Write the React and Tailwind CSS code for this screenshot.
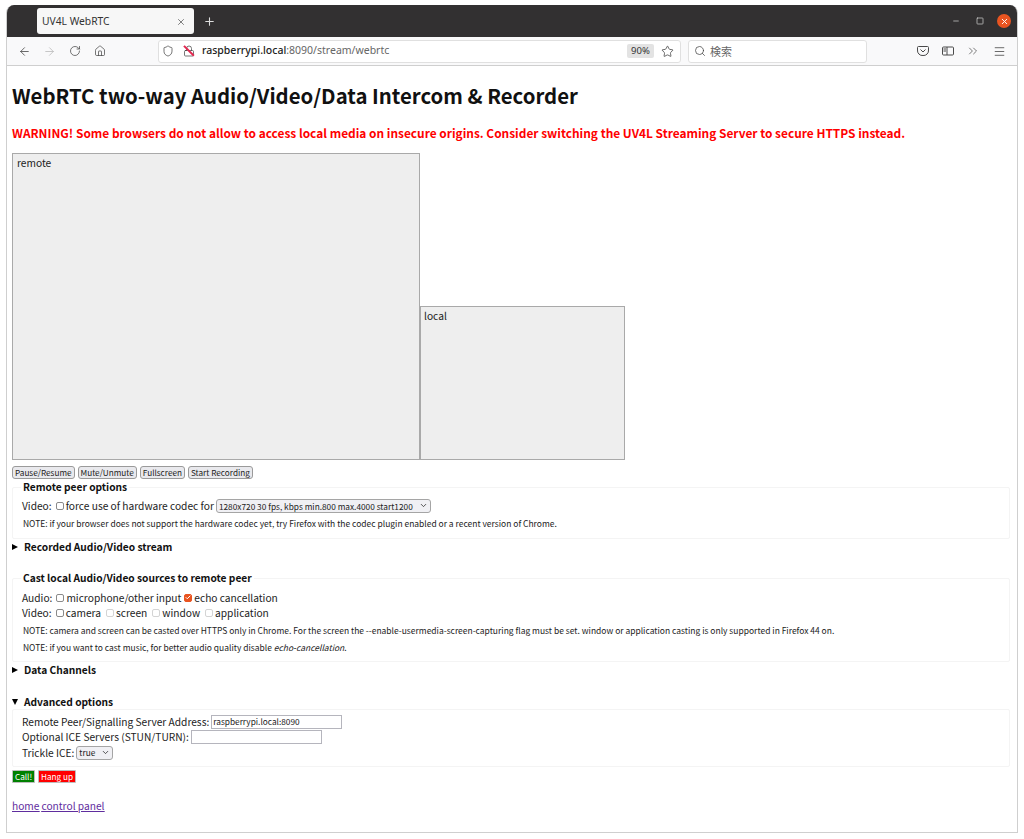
import { ArrowLeft, ArrowRight, RotateCw, Home, Shield, Lock, Star, Search, X, Plus, Minus, Square, ChevronsRight, Menu, ChevronDown, Check } from 'lucide-react';

const pageFont = "font-['Noto_Sans_CJK_JP','Noto_Sans',sans-serif]";
const chromeFont = "font-['Noto_Sans','Noto_Sans_CJK_JP',sans-serif]";

const Box = ({ checked, faded }) => (
  <span className={`inline-flex h-[8px] w-[8px] items-center justify-center rounded-[2px] border ${checked ? 'border-[#e95420] bg-[#e95420]' : faded ? 'border-[#d4d4d4] bg-white' : 'border-[#8a8a8a] bg-white'}`}>
    {checked && <Check size={7} strokeWidth={4} className="text-white" />}
  </span>
);

const Option = ({ label, checked, faded }) => (
  <span className="flex items-center gap-[2px]">
    <Box checked={checked} faded={faded} />
    <span>{label}</span>
  </span>
);

const Select = ({ label, width }) => (
  <span className={`flex h-[14px] items-center justify-between whitespace-nowrap rounded-[3px] border border-[#a5a5a5] bg-[#f0f0f4] px-[2px] text-[8.3px] text-[#222] ${width}`}>
    <span>{label}</span>
    <ChevronDown size={9} strokeWidth={2} />
  </span>
);

const PlayerButton = ({ children }) => (
  <button className="h-[13px] rounded-[3px] border border-[#9a9a9a] bg-[#e9e9ed] px-[2px] text-[8.2px] leading-none text-[#222]">{children}</button>
);

const Legend = ({ children, marker }) => (
  <div className="relative z-10 flex h-[16px] items-center text-[10.2px] font-bold text-[#111]">
    {marker === 'closed' && <span className="mr-[6px] h-0 w-0 border-y-[3.5px] border-l-[6px] border-y-transparent border-l-black" />}
    {marker === 'open' && <span className="mr-[6px] h-0 w-0 border-x-[3.5px] border-t-[6px] border-x-transparent border-t-black" />}
    <span className={marker ? '' : 'ml-[9px] bg-white px-[2px]'}>{children}</span>
  </div>
);

const Fieldset = ({ children, className }) => (
  <div className={`mr-[7px] rounded-[2px] border border-[#f4f4f4] pl-[9px] ${className}`}>{children}</div>
);

const App = () => {
  return (
    <div className={`h-[839px] w-[1024px] overflow-hidden bg-white pl-[6px] pr-[6px] pt-[5px] ${pageFont}`}>
      <div className="h-[828px] overflow-hidden rounded-t-[8px] border-x border-b border-[#cfcfcf]">
        {/* Browser tab strip */}
        <div className={`flex h-[32px] items-center bg-[#323031] pl-[30px] pr-[6px] ${chromeFont}`}>
          <div className="flex h-[26px] w-[157px] items-center justify-between rounded-[3px] bg-[#f7f7f7] pl-[5px] pr-[8px] pt-[1px] text-[10.3px] text-[#333]">
            <span>UV4L WebRTC</span>
            <X size={10} className="text-[#666]" />
          </div>
          <Plus size={13} className="ml-[9px] text-[#ddd]" />
          <div className="ml-auto flex items-center text-[#ddd]">
            <Minus size={8} strokeWidth={2} />
            <Square size={8} strokeWidth={2} className="ml-[16px]" />
            <span className="ml-[13px] flex h-[14px] w-[14px] items-center justify-center rounded-full bg-[#e95420]">
              <X size={9} strokeWidth={2.5} className="text-white" />
            </span>
          </div>
        </div>

        {/* Browser toolbar */}
        <div className={`flex h-[29px] items-center border-b border-[#cfcfcf] bg-[#f9f9fa] pl-[11px] pr-[11px] text-[#4a4a4a] ${chromeFont}`}>
          <ArrowLeft size={13} strokeWidth={1.5} />
          <ArrowRight size={13} strokeWidth={1.5} className="ml-[12px] text-[#bbb]" />
          <RotateCw size={12} strokeWidth={1.5} className="ml-[13px]" />
          <Home size={12} strokeWidth={1.5} className="ml-[13px]" />
          <div className="ml-[52px] flex h-[23px] w-[523px] items-center rounded-[3px] border border-[#e0e0e0] bg-white pl-[3px] pr-[3px]">
            <Shield size={12} strokeWidth={1.5} />
            <span className="relative ml-[9px] flex">
              <Lock size={12} strokeWidth={1.5} />
              <span className="absolute left-[5px] top-[-1px] h-[14px] w-[1.5px] -rotate-45 bg-[#e22850]" />
            </span>
            <span className="ml-[7px] text-[10.5px] text-[#666]"><span className="font-medium text-[#222]">raspberrypi.local</span>:8090/stream/webrtc</span>
            <span className="ml-auto flex h-[14px] w-[27px] items-center justify-center rounded-[2px] bg-[#e3e3e3] text-[9.5px] text-[#333]">90%</span>
            <Star size={13} strokeWidth={1.5} className="ml-[7px] mr-[3px]" />
          </div>
          <div className="ml-[7px] flex h-[23px] w-[179px] items-center rounded-[3px] border border-[#e0e0e0] bg-white pl-[5px] text-[11px] text-[#666]">
            <Search size={12} strokeWidth={1.5} className="text-[#444]" />
            <span className={`ml-[4px] ${pageFont}`}>検索</span>
          </div>
          <div className="ml-auto flex items-center gap-[12.7px]">
            <svg width="12" height="12" viewBox="0 0 12 12" fill="none" stroke="currentColor"><path d="M1.5 1.5h9a1 1 0 0 1 1 1V5a5 5 0 0 1-5.5 5.5A5 5 0 0 1 .5 5V2.5a1 1 0 0 1 1-1z" /><path d="M3.5 4.5 6 7l2.5-2.5" /></svg>
            <svg width="12" height="12" viewBox="0 0 12 12" fill="none" stroke="currentColor"><rect x="0.5" y="2" width="11" height="8" rx="1" /><path d="M5 2v8M1.5 4H4M1.5 6H4" /></svg>
            <ChevronsRight size={14} strokeWidth={1.25} />
            <Menu size={13} strokeWidth={1.5} />
          </div>
        </div>

        {/* Page */}
        <div className="pl-[5px] text-[10.2px] text-[#222]">
          <h1 className="mt-[16px] h-[27px] text-[20.35px] font-bold leading-[27px] text-[#111]">WebRTC two-way Audio/Video/Data Intercom &amp; Recorder</h1>
          <p className="mt-[15px] h-[18px] text-[11.9px] font-bold leading-[18px] text-[#ff0000]">WARNING! Some browsers do not allow to access local media on insecure origins. Consider switching the UV4L Streaming Server to secure HTTPS instead.</p>

          <div className="mt-[11px] flex items-end">
            <div className="h-[307px] w-[408px] border border-[#a9a9a9] bg-[#eeeeee] px-[4px] leading-[17px]">remote</div>
            <div className="h-[154px] w-[205px] border border-[#a9a9a9] bg-[#eeeeee] px-[3px] leading-[17px]">local</div>
          </div>

          <div className="mt-[6px] flex gap-[3px]">
            <PlayerButton>Pause/Resume</PlayerButton>
            <PlayerButton>Mute/Unmute</PlayerButton>
            <PlayerButton>Fullscreen</PlayerButton>
            <PlayerButton>Start Recording</PlayerButton>
          </div>

          <Legend>Remote peer options</Legend>
          <Fieldset className="-mt-[8px] h-[52px]">
            <div className="mt-[10px] flex h-[16px] items-center gap-[4px]">
              <span>Video:</span>
              <span className="flex items-center gap-[2px]">
                <Option label="force use of hardware codec for" />
                <Select label="1280x720 30 fps, kbps min.800 max.4000 start1200" width="w-[215px]" />
              </span>
            </div>
            <div className="mt-[2px] h-[14px] pl-[1px] text-[8.48px] leading-[14px]">NOTE: if your browser does not support the hardware codec yet, try Firefox with the codec plugin enabled or a recent version of Chrome.</div>
          </Fieldset>

          <Legend marker="closed">Recorded Audio/Video stream</Legend>

          <div className="mt-[15px]"><Legend>Cast local Audio/Video sources to remote peer</Legend></div>
          <Fieldset className="-mt-[8px] h-[84px]">
            <div className="mt-[11px] flex h-[15px] items-center gap-[3px]">
              <span className="mr-[1px]">Audio:</span>
              <Option label="microphone/other input" />
              <Option label="echo cancellation" checked />
            </div>
            <div className="flex h-[15px] items-center gap-[5px]">
              <span className="-mr-[1px]">Video:</span>
              <Option label="camera" />
              <Option label="screen" faded />
              <Option label="window" faded />
              <Option label="application" faded />
            </div>
            <div className="mt-[2px] h-[16px] pl-[1px] text-[8.48px] leading-[16px]">NOTE: camera and screen can be casted over HTTPS only in Chrome. For the screen the --enable-usermedia-screen-capturing flag must be set. window or application casting is only supported in Firefox 44 on.</div>
            <div className="mt-[1px] h-[16px] pl-[1px] text-[8.48px] leading-[16px]">NOTE: if you want to cast music, for better audio quality disable <em>echo-cancellation</em>.</div>
          </Fieldset>

          <Legend marker="closed">Data Channels</Legend>
          <div className="mt-[16px]"><Legend marker="open">Advanced options</Legend></div>
          <Fieldset className="-mt-[1px] h-[58px]">
            <div className="mt-[4px] flex h-[15px] items-center gap-[2px]">
              <span>Remote Peer/Signalling Server Address:</span>
              <span className="flex h-[14px] w-[131px] items-center border border-[#b5b5bd] bg-white px-[1px] text-[8.3px]">raspberrypi.local:8090</span>
            </div>
            <div className="flex h-[15px] items-center gap-[2px]">
              <span>Optional ICE Servers (STUN/TURN):</span>
              <span className="h-[14px] w-[131px] border border-[#b5b5bd] bg-white" />
            </div>
            <div className="mt-[1px] flex h-[15px] items-center gap-[2px]">
              <span>Trickle ICE:</span>
              <Select label="true" width="w-[37px]" />
            </div>
          </Fieldset>

          <div className="mt-[3px] flex gap-[3px]">
            <button className="h-[13px] w-[23px] rounded-[1px] border border-[#bdbdbd] bg-[#008000] text-[8.2px] leading-none text-white">Call!</button>
            <button className="h-[13px] w-[38px] rounded-[1px] border border-[#bdbdbd] bg-[#ff0000] text-[8.2px] leading-none text-white">Hang up</button>
          </div>

          <div className="mt-[15px] flex h-[16px] items-center gap-[2px] text-[#5f2d9e] underline">
            <a href="#home">home</a>
            <a href="#panel">control panel</a>
          </div>
        </div>
      </div>
    </div>
  );
};

export default App;
